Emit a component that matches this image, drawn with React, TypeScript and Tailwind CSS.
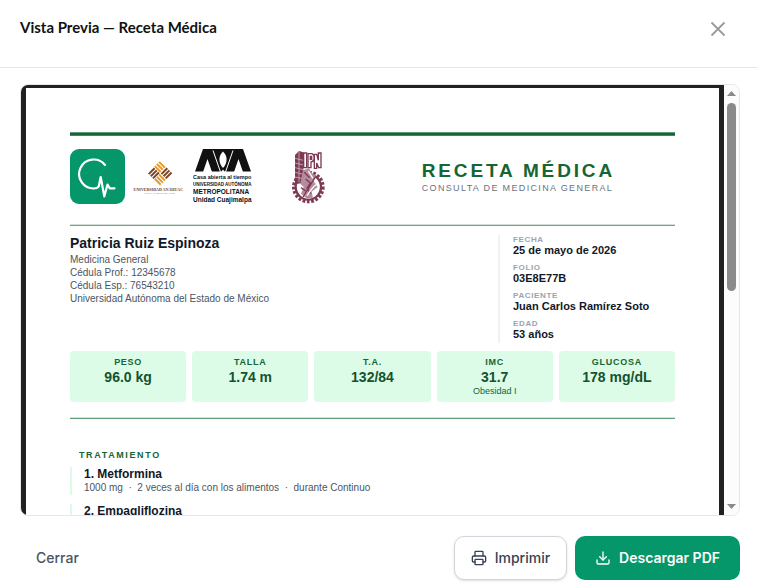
import { Download, Printer } from "lucide-react";

const doctorLines = [
  "Medicina General",
  "Cédula Prof.: 12345678",
  "Cédula Esp.: 76543210",
  "Universidad Autónoma del Estado de México",
];

const meta = [
  { label: "FECHA", value: "25 de mayo de 2026" },
  { label: "FOLIO", value: "03E8E77B" },
  { label: "PACIENTE", value: "Juan Carlos Ramírez Soto" },
  { label: "EDAD", value: "53 años" },
];

const vitals = [
  { label: "PESO", value: "96.0 kg", note: "" },
  { label: "TALLA", value: "1.74 m", note: "" },
  { label: "T.A.", value: "132/84", note: "" },
  { label: "IMC", value: "31.7", note: "Obesidad I" },
  { label: "GLUCOSA", value: "178 mg/dL", note: "" },
];

const treatments = [
  {
    name: "1. Metformina",
    detail: ["1000 mg", "2 veces al día con los alimentos", "durante Continuo"],
  },
  { name: "2. Empagliflozina", detail: [] },
];

function PulseLogo() {
  return (
    <svg viewBox="0 0 55 55" className="size-[55px] shrink-0" role="img" aria-label="Consultorio">
      <rect width="55" height="55" rx="9" fill="#059669" />
      <path
        d="M35 16A14.500 14.500 0 1 0 24 39.500C26 39.500 27.500 39 28.700 37.500L30.700 28L34.300 47.500L37.500 35.500L39.700 39.300H44.500"
        fill="none"
        stroke="#fff"
        strokeWidth="2.2"
        strokeLinecap="round"
        strokeLinejoin="round"
      />
    </svg>
  );
}

function AnahuacLogo() {
  return (
    <svg viewBox="0 0 153 104" className="h-[35px] w-[51px] shrink-0" role="img" aria-label="Anáhuac">
      <g transform="translate(81 36) rotate(45)" fill="none" strokeWidth="6">
        <path d="M-26 -22H-1M-26 -13H-1M-26 -4H-1" stroke="#e79a2c" />
        <path d="M5 -26V-1M14 -26V-1M23 -26V-1" stroke="#7a4420" />
        <path d="M1 5H26M1 14H26M1 23H26" stroke="#e79a2c" />
        <path d="M-22 1V26M-13 1V26M-4 1V26" stroke="#7a4420" />
      </g>
      <text x="76" y="89" textAnchor="middle" fontSize="12" fontWeight="700" fill="#6b3a1c" className="font-['Liberation_Serif',serif]">
        UNIVERSIDAD ANÁHUAC
      </text>
      <text x="79" y="99" textAnchor="middle" fontSize="8" fill="#8d6a54" className="font-['Liberation_Serif',serif]">
        VINCE IN BONO MALUM
      </text>
    </svg>
  );
}

function UamLogo() {
  return (
    <svg viewBox="0 0 120 110" className="h-[55px] w-[60px] shrink-0" role="img" aria-label="UAM">
      <path d="M20 0H100L116 45H4Z" fill="#111" />
      <path d="M20 46L29 20L38 46ZM82 46L91 20L100 46Z" fill="#fff" />
      <path d="M60 5C51 13 50 27 60 38C70 27 69 13 60 5Z" fill="#fff" />
      <path d="M40 3L55 46M80 3L65 46" fill="none" stroke="#fff" strokeWidth="2" />
      <path d="M56 46L60 41L64 46Z" fill="#fff" />
      <g fill="#111" fontWeight="700" className="font-['Liberation_Sans',sans-serif]">
        <text x="0" y="60" fontSize="11">Casa abierta al tiempo</text>
        <text x="0" y="73" fontSize="9">UNIVERSIDAD AUTÓNOMA</text>
        <text x="0" y="90" fontSize="13">METROPOLITANA</text>
        <text x="0" y="106" fontSize="13">Unidad Cuajimalpa</text>
      </g>
    </svg>
  );
}

function IpnLogo() {
  return (
    <svg viewBox="0 0 102 165" className="h-[55px] w-[34px] shrink-0" role="img" aria-label="Instituto Politécnico Nacional">
      <circle cx="52" cy="114" r="44" fill="none" stroke="#7d3a55" strokeWidth="10" strokeDasharray="8 5" />
      <circle cx="52" cy="114" r="38" fill="#fff" stroke="#7d3a55" strokeWidth="7" />
      <path d="M12 18L24 6L37 10V78L34 102L12 106Z" fill="#7d3a55" />
      <path d="M12 28L37 34M12 42L37 48M12 56L37 62M12 70L37 76M12 84L36 89M24 8V100" stroke="#cfb0bd" strokeWidth="2.5" />
      <path d="M36 64L54 58L62 72L76 80L68 96L80 114L62 128L66 146L46 148L30 134L38 114L28 104Z" fill="#b58c9e" />
      <path d="M36 144L74 82M44 90L58 102L48 118L60 134M30 116L44 126M40 70L56 86" stroke="#7d3a55" strokeWidth="4" fill="none" />
      <path d="M48 140C58 128 62 114 82 102M52 66L66 88" stroke="#fff" strokeWidth="4" fill="none" />
      <g fill="#fff" stroke="#7d3a55" strokeWidth="4">
        <path d="M38 12H47V56H38Z" />
        <path fillRule="evenodd" d="M51 14H63Q71 18 70 28Q69 38 60 39V56H51ZM58 22V31H62V22Z" />
        <path d="M70 16H77L82 34V12H90V56H83L77 42V58H70Z" />
      </g>
    </svg>
  );
}

function Rule({ className }: { className: string }) {
  return <div className={`h-[2px] border-t border-b border-t-[#d3e2d9] ${className}`} />;
}

function Prescription() {
  return (
    <article className="bg-white px-11 pt-11 pb-10 font-['Liberation_Sans',Arial,sans-serif] text-[#111827]">
      <div className="h-1 border-t border-b border-t-[#62987a] border-b-[#45845d] bg-[#166534]" />
      <header className="flex items-center pt-[13px] pb-5">
        <div className="flex flex-1 items-center">
          <PulseLogo />
          <div className="ml-2 pt-1">
            <AnahuacLogo />
          </div>
          <div className="ml-[9px]">
            <UamLogo />
          </div>
          <div className="ml-[38px]">
            <IpnLogo />
          </div>
        </div>
        <div className="mr-[60px]">
          <h2 className="text-[19px] leading-[22px] font-bold tracking-[0.15em] text-[#166534]">RECETA MÉDICA</h2>
          <p className="text-[9px] leading-[12px] tracking-[0.15em] text-[#6b7280]">CONSULTA DE MEDICINA GENERAL</p>
        </div>
      </header>
      <Rule className="border-b-[#73a287]" />

      <section className="flex justify-between pt-[9px]">
        <div>
          <h3 className="text-[14px] leading-[16px] font-bold">Patricia Ruiz Espinoza</h3>
          <div className="mt-[2px] text-[10px] leading-[13px] text-[#4b5563]">
            {doctorLines.map((line) => (
              <p key={line}>{line}</p>
            ))}
          </div>
        </div>
        <dl className="flex w-[177px] flex-col gap-[6px] border-l-2 border-[#f0f1f3] pb-[2px] pl-[13px]">
          {meta.map((m) => (
            <div key={m.label}>
              <dt className="text-[8px] leading-[9px] font-bold tracking-[0.08em] text-[#9ca3af]">{m.label}</dt>
              <dd className="text-[11px] leading-[13px] font-bold">{m.value}</dd>
            </div>
          ))}
        </dl>
      </section>

      <section className="mt-2 grid grid-cols-5 gap-[6px]">
        {vitals.map((v) => (
          <div key={v.label} className="min-h-[51px] rounded-[4px] bg-[#dcfce7] pt-[5px] pb-[5px] text-center">
            <p className="text-[9px] leading-[12px] font-bold tracking-[0.08em] text-[#166534]">{v.label}</p>
            <p className="text-[14px] leading-[18px] font-bold text-[#14532d]">{v.value}</p>
            {v.note && <p className="text-[9px] leading-[11px] text-[#166534]">{v.note}</p>}
          </div>
        ))}
      </section>
      <Rule className="mt-[15px] border-b-[#5ea07c]" />

      <section className="pt-[30px]">
        <h4 className="pl-[9px] text-[9px] leading-[12px] font-bold tracking-[0.18em] text-[#166534]">TRATAMIENTO</h4>
        <ol className="mt-[6px] flex flex-col gap-[9px]">
          {treatments.map((t) => (
            <li key={t.name} className="border-l-2 border-[#dcfce7] pl-3">
              <p className="text-[12px] leading-[14px] font-bold">{t.name}</p>
              {t.detail.length > 0 && (
                <p className="text-[10px] leading-[14px] text-[#4b5563]">{t.detail.join("\u00a0 · \u00a0")}</p>
              )}
            </li>
          ))}
        </ol>
      </section>
    </article>
  );
}

function ScrollTrack() {
  return (
    <div className="flex w-[15px] shrink-0 flex-col items-center bg-[#fcfcfc] pt-[6px] pb-[6px]" aria-hidden="true">
      <svg viewBox="0 0 9 5" className="h-[5px] w-[9px]">
        <path d="M4.500 0L9 5H0Z" fill="#8b8b8b" />
      </svg>
      <div className="mt-[7px] flex w-[9px] flex-1 flex-col">
        <div className="h-[47%] rounded-full bg-[#8b8b8b]" />
      </div>
      <svg viewBox="0 0 9 5" className="h-[5px] w-[9px]">
        <path d="M0 0H9L4.500 5Z" fill="#8b8b8b" />
      </svg>
    </div>
  );
}

export default function App() {
  return (
    <div className="flex h-screen flex-col bg-white font-['Inter',sans-serif]">
      <header className="flex items-start justify-between border-b border-[#e5e7eb] pt-4 pr-8 pb-[28px] pl-5">
        <h1 className="font-['Lato',sans-serif] text-[15px] leading-[23px] font-bold text-[#111]">
          Vista Previa — Receta Médica
        </h1>
        <button type="button" aria-label="Cerrar vista previa" className="mt-[5px] text-[#9a9a9a]">
          <svg viewBox="0 0 16 16" className="size-4" fill="none" stroke="currentColor" strokeWidth="1.8">
            <path d="M1.500 1.500L14.500 14.500M14.500 1.500L1.500 14.500" />
          </svg>
        </button>
      </header>

      <main className="flex min-h-0 flex-1 flex-col pt-4 pr-[18px] pl-5">
        <div className="flex min-h-0 flex-1 overflow-hidden rounded-lg border border-[#e5e7eb]">
          <div className="min-w-0 flex-1 overflow-y-auto bg-[#212121] px-[5px] pt-[3px] [scrollbar-width:none]">
            <Prescription />
          </div>
          <ScrollTrack />
        </div>
      </main>

      <footer className="flex items-center justify-between pt-5 pr-[18px] pb-[7px] pl-5 text-[14px] leading-5 font-medium">
        <button type="button" className="h-11 px-4 text-[#4b5563]">
          Cerrar
        </button>
        <div className="flex gap-2">
          <button
            type="button"
            className="flex h-11 items-center gap-2 rounded-[10px] border border-[#d1d5db] bg-white px-4 text-[#374151] shadow-sm"
          >
            <Printer className="size-4" strokeWidth={2} />
            Imprimir
          </button>
          <button type="button" className="flex h-11 items-center gap-2 rounded-[10px] bg-[#059669] px-5 font-semibold text-white">
            <Download className="size-4" strokeWidth={2} />
            Descargar PDF
          </button>
        </div>
      </footer>
    </div>
  );
}
